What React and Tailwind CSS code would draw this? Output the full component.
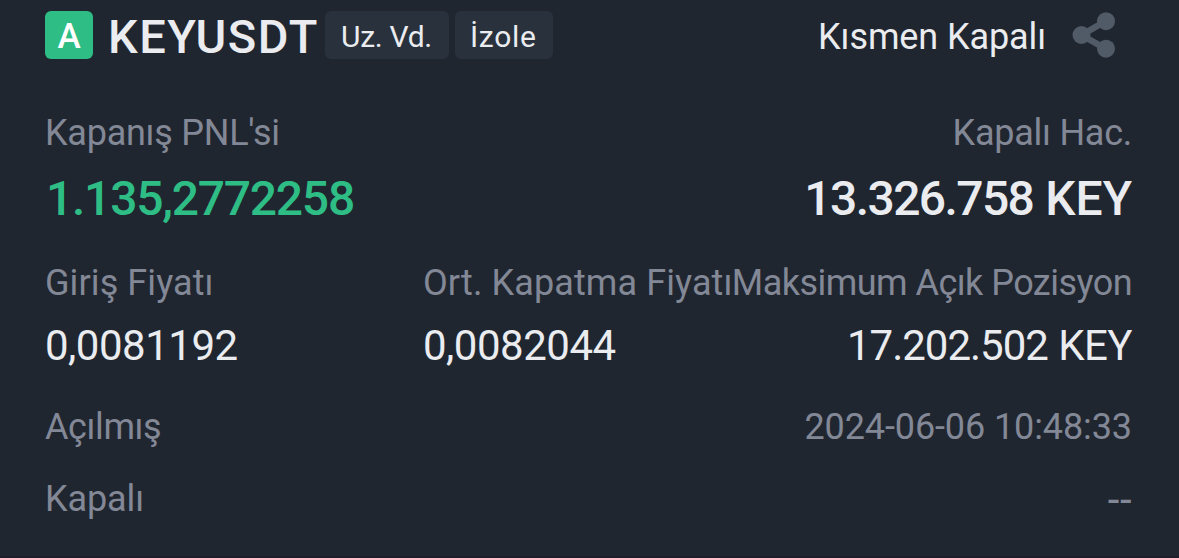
/**
 * Closed position card
 * Shows the PNL, prices and timestamps of a single futures position.
 */

import React from 'react';

const position = {
  symbol: 'KEYUSDT',
  asset: 'KEY',
  status: 'Kısmen Kapalı',
  pnl: '1.135,2772258',
  closedVolume: '13.326.758',
  entryPrice: '0,0081192',
  closePrice: '0,0082044',
  maxOpen: '17.202.502',
  openedAt: '2024-06-06 10:48:33',
  closedAt: '--',
};

const ShareIcon = () => (
  <svg className="w-[44px] h-[46px] shrink-0 text-[#515a67]" viewBox="0 0 44 46" fill="none">
    <path d="M34 9 9.5 23 34 37" stroke="currentColor" strokeWidth="6.5" />
    <circle cx="9.5" cy="23" r="9" fill="currentColor" />
    <circle cx="34" cy="9.2" r="9" fill="currentColor" />
    <circle cx="34" cy="36.7" r="9" fill="currentColor" />
  </svg>
);

const App = () => {
  return (
    <div className="w-[1179px] h-[558px] overflow-hidden whitespace-nowrap bg-[#202630] border-b-2 border-[#1f1f2b] pt-[11px] pl-[45px] pr-[47px] font-['Roboto',sans-serif] text-[36px] leading-[48px] text-[#838896]">

      {/* ── Header ───────────────────────────────────────────────────────────── */}
      <div className="flex items-center h-12 text-[#eaecef]">
        <div className="w-12 h-12 shrink-0 rounded-[6px] bg-[#2ebd85] flex items-center justify-center pt-[4px] text-[35px] font-medium text-white">
          A
        </div>
        <h1 className="w-[217px] ml-[15px] pt-1 text-[47px] font-medium tracking-[1.55px]">
          {position.symbol}
        </h1>
        <span className="w-[124px] h-12 rounded-[6px] bg-[#29313d] pl-[16px] pt-[3px] text-[30px] leading-[45px] tracking-[-0.3px]">
          Uz. Vd.
        </span>
        <span className="w-[98px] h-12 ml-[6px] rounded-[6px] bg-[#29313d] pl-[15px] pt-[3px] text-[30px] leading-[45px] tracking-[0.7px]">
          İzole
        </span>
        <div className="ml-auto mr-[16px] flex items-center">
          <span className="pt-1 mr-[26px] tracking-[-0.1px]">{position.status}</span>
          <ShareIcon />
        </div>
      </div>

      {/* ── PNL / closed volume ──────────────────────────────────────────────── */}
      <div className="mt-[50px] flex justify-between">
        <div>
          <p className="tracking-[-0.25px]">Kapanış PNL'si</p>
          <p className="mt-3 pl-px text-[48px] leading-[60px] font-medium tracking-[-1.25px] text-[#2ebd85]">
            {position.pnl}
          </p>
        </div>
        <div className="text-right">
          <p className="tracking-[-0.25px]">Kapalı Hac.</p>
          <p className="mt-3 text-[48px] leading-[60px] font-medium text-[#eaecef]">
            <span className="tracking-[-1.6px]">{position.closedVolume}</span>{' '}
            <span>{position.asset}</span>
          </p>
        </div>
      </div>

      {/* ── Prices ───────────────────────────────────────────────────────────── */}
      <div className="mt-[30px] flex">
        <div className="w-[378px] shrink-0">
          <p className="tracking-[0.1px]">Giriş Fiyatı</p>
          <p className="mt-[11px] text-[42px] leading-[56px] tracking-[-0.5px] text-[#eaecef]">{position.entryPrice}</p>
        </div>
        <div className="w-[308px] shrink-0">
          <p className="tracking-[0.1px]">Ort. Kapatma Fiyatı</p>
          <p className="mt-[11px] text-[42px] leading-[56px] tracking-[-0.5px] text-[#eaecef]">{position.closePrice}</p>
        </div>
        <div className="min-w-0 flex-1 flex flex-col items-end">
          <p className="tracking-[-0.54px]">Maksimum Açık Pozisyon</p>
          <p className="mt-[11px] text-[42px] leading-[56px] text-[#eaecef]">
            <span className="tracking-[-1px]">{position.maxOpen}</span>{' '}
            <span className="tracking-[-0.6px]">{position.asset}</span>
          </p>
        </div>
      </div>

      {/* ── Timestamps ───────────────────────────────────────────────────────── */}
      <div className="mt-[29px] flex justify-between">
        <span className="tracking-[-0.4px]">Açılmış</span>
        <span className="tracking-[-0.1px]">{position.openedAt}</span>
      </div>
      <div className="mt-6 flex justify-between">
        <span className="tracking-[-0.1px]">Kapalı</span>
        <span className="pt-px text-[42px] tracking-[0.5px]">{position.closedAt}</span>
      </div>
    </div>
  );
};

export default App;
